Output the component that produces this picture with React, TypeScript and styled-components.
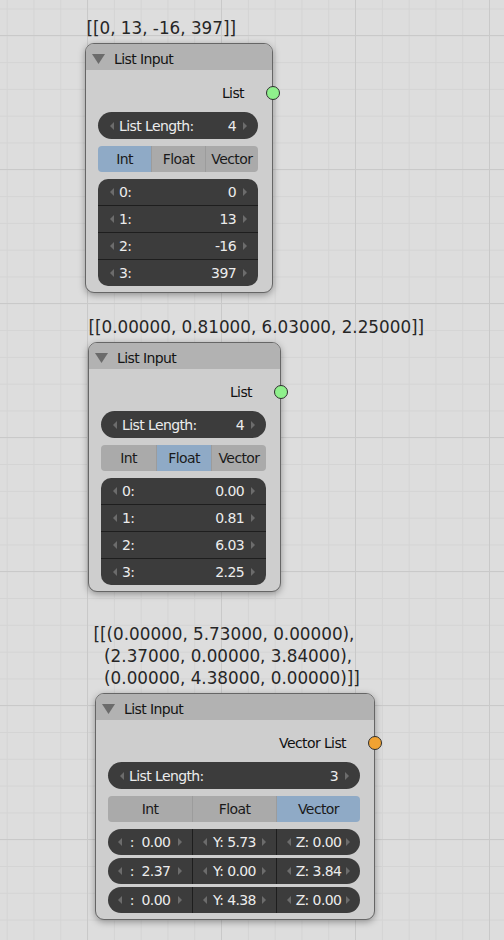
import React from "react";
import styled, { createGlobalStyle } from "styled-components";

const Global = createGlobalStyle`
  html, body { margin: 0; padding: 0; }
  body { font-family: "DejaVu Sans", sans-serif; }
`;

const Canvas = styled.div`
  position: relative;
  width: 504px;
  height: 940px;
  overflow: hidden;
  background-color: #dddddd;
  background-image:
    linear-gradient(to right, #c9c9c9 0 1px, transparent 1px),
    linear-gradient(to bottom, #c9c9c9 0 1px, transparent 1px),
    linear-gradient(to right, #d4d4d4 0 1px, transparent 1px),
    linear-gradient(to bottom, #d4d4d4 0 1px, transparent 1px);
  background-size: 134px 100%, 100% 134px, 26.8px 100%, 100% 26.8px;
  background-position: 87px 0, 0 35px, 6.7px 0, 0 8.5px;
  font-family: "DejaVu Sans", sans-serif;
`;

const NodeGroup = styled.div<{ $x: number; $y: number }>`
  position: absolute;
  left: ${(p) => p.$x}px;
  top: ${(p) => p.$y}px;
  display: flex;
  flex-direction: column;
  align-items: flex-start;
`;

const Label = styled.div<{ $dx: number }>`
  margin-left: ${(p) => p.$dx}px;
  margin-bottom: 4.5px;
  font-size: 16.8px;
  line-height: 22px;
  color: #262626;
  white-space: pre;
`;

const Node = styled.div<{ $w: number }>`
  width: ${(p) => p.$w}px;
  box-sizing: border-box;
  border: 1px solid #666666;
  border-radius: 9px;
  background: #cecece;
  box-shadow: 0 2px 7px rgba(0, 0, 0, 0.35);
  font-size: 14px;
  letter-spacing: -0.6px;
`;

const Header = styled.div`
  height: 26px;
  box-sizing: border-box;
  padding: 4px 0 0 6px;
  display: flex;
  align-items: center;
  background: #b2b2b2;
  border-radius: 8px 8px 0 0;
`;

const Title = styled.span`
  margin-left: 9px;
  color: #141414;
`;

const Body = styled.div`
  display: flex;
  flex-direction: column;
  gap: 7px;
  padding: 10px 14px 6px 12px;
`;

const OutputRow = styled.div`
  position: relative;
  height: 25px;
  display: flex;
  align-items: center;
  justify-content: flex-end;
  padding-right: 14px;
  color: #111111;
`;

const Socket = styled.span<{ $color: string }>`
  position: absolute;
  right: -22px;
  top: 50%;
  transform: translateY(-50%);
  width: 14px;
  height: 14px;
  box-sizing: border-box;
  border-radius: 50%;
  border: 1px solid #2e2e2e;
  background: ${(p) => p.$color};
`;

const Field = styled.div`
  height: 27px;
  border-radius: 13.5px;
  background: #3c3c3c;
  color: #ececec;
  display: flex;
  align-items: center;
  padding: 0 11px 0 12px;
`;

const FieldLabel = styled.span`
  flex: 1;
  margin-left: 5px;
`;

const FieldValue = styled.span`
  margin-right: 7px;
`;

const ArrowSvg = styled.svg`
  flex: none;
  fill: #6c6c6c;
`;

const Arrow = ({ dir }: { dir: "l" | "r" }) => (
  <ArrowSvg width="4" height="8" viewBox="0 0 4 8">
    <polygon points={dir === "l" ? "4,0 0,4 4,8" : "0,0 4,4 0,8"} />
  </ArrowSvg>
);

const Tabs = styled.div`
  display: grid;
  grid-template-columns: repeat(3, 1fr);
  height: 26px;
  border-radius: 4px;
  overflow: hidden;
`;

const Tab = styled.div<{ $active: boolean }>`
  display: flex;
  align-items: center;
  justify-content: center;
  color: #1a1a1a;
  background: ${(p) => (p.$active ? "#8faac6" : "#aaaaaa")};
  & + & {
    border-left: 1px solid #9c9c9c;
  }
`;

const List = styled.div`
  border-radius: 10px;
  overflow: hidden;
  background: #3c3c3c;
`;

const ListRow = styled.div`
  height: 26px;
  display: flex;
  align-items: center;
  padding: 0 11px 0 12px;
  color: #ececec;
  & + & {
    border-top: 1px solid #1e1e1e;
  }
`;

const VectorRows = styled.div`
  display: flex;
  flex-direction: column;
  gap: 3px;
`;

const VectorRow = styled.div`
  display: grid;
  grid-template-columns: repeat(3, 1fr);
  height: 26px;
  border-radius: 13px;
  overflow: hidden;
  background: #3c3c3c;
`;

const VecCell = styled.div`
  display: flex;
  align-items: center;
  justify-content: space-between;
  padding: 0 10px;
  color: #ececec;
  white-space: pre;
  & + & {
    border-left: 1px solid #1e1e1e;
  }
`;

const Triangle = () => (
  <svg width="13" height="10" viewBox="0 0 13 10">
    <polygon points="0,0 13,0 6.5,10" fill="#6b6b6b" />
  </svg>
);

type NodeData = {
  label: string;
  x: number;
  y: number;
  dx: number;
  w: number;
  output: string;
  socket: string;
  length: number;
  active: number;
  rows?: string[];
  vectors?: string[][];
};

const nodes: NodeData[] = [
  {
    label: "[[0, 13, -16, 397]]",
    x: 85,
    y: 16.5,
    dx: 1.4,
    w: 188,
    output: "List",
    socket: "#8ff08c",
    length: 4,
    active: 0,
    rows: ["0", "13", "-16", "397"],
  },
  {
    label: "[[0.00000, 0.81000, 6.03000, 2.25000]]",
    x: 88,
    y: 315.5,
    dx: 0.4,
    w: 193,
    output: "List",
    socket: "#8ff08c",
    length: 4,
    active: 1,
    rows: ["0.00", "0.81", "6.03", "2.25"],
  },
  {
    label:
      "[[(0.00000, 5.73000, 0.00000),\n  (2.37000, 0.00000, 3.84000),\n  (0.00000, 4.38000, 0.00000)]]",
    x: 95,
    y: 622.5,
    dx: -1.6,
    w: 280,
    output: "Vector List",
    socket: "#f0a232",
    length: 3,
    active: 2,
    vectors: [
      [":  0.00", "Y: 5.73", "Z: 0.00"],
      [":  2.37", "Y: 0.00", "Z: 3.84"],
      [":  0.00", "Y: 4.38", "Z: 0.00"],
    ],
  },
];

const tabNames = ["Int", "Float", "Vector"];

const ListInputNode = ({ n }: { n: NodeData }) => (
  <NodeGroup $x={n.x} $y={n.y}>
    <Label $dx={n.dx}>{n.label}</Label>
    <Node $w={n.w}>
      <Header>
        <Triangle />
        <Title>List Input</Title>
      </Header>
      <Body>
        <OutputRow>
          {n.output}
          <Socket $color={n.socket} />
        </OutputRow>
        <Field>
          <Arrow dir="l" />
          <FieldLabel>List Length:</FieldLabel>
          <FieldValue>{n.length}</FieldValue>
          <Arrow dir="r" />
        </Field>
        <Tabs>
          {tabNames.map((t, i) => (
            <Tab key={t} $active={i === n.active}>
              {t}
            </Tab>
          ))}
        </Tabs>
        {n.rows && (
          <List>
            {n.rows.map((v, i) => (
              <ListRow key={i}>
                <Arrow dir="l" />
                <FieldLabel>{i}:</FieldLabel>
                <FieldValue>{v}</FieldValue>
                <Arrow dir="r" />
              </ListRow>
            ))}
          </List>
        )}
        {n.vectors && (
          <VectorRows>
            {n.vectors.map((row, i) => (
              <VectorRow key={i}>
                {row.map((c, j) => (
                  <VecCell key={j}>
                    <Arrow dir="l" />
                    <span>{c}</span>
                    <Arrow dir="r" />
                  </VecCell>
                ))}
              </VectorRow>
            ))}
          </VectorRows>
        )}
      </Body>
    </Node>
  </NodeGroup>
);

export default function App() {
  return (
    <>
      <Global />
      <Canvas>
        {nodes.map((n, i) => (
          <ListInputNode key={i} n={n} />
        ))}
      </Canvas>
    </>
  );
}
